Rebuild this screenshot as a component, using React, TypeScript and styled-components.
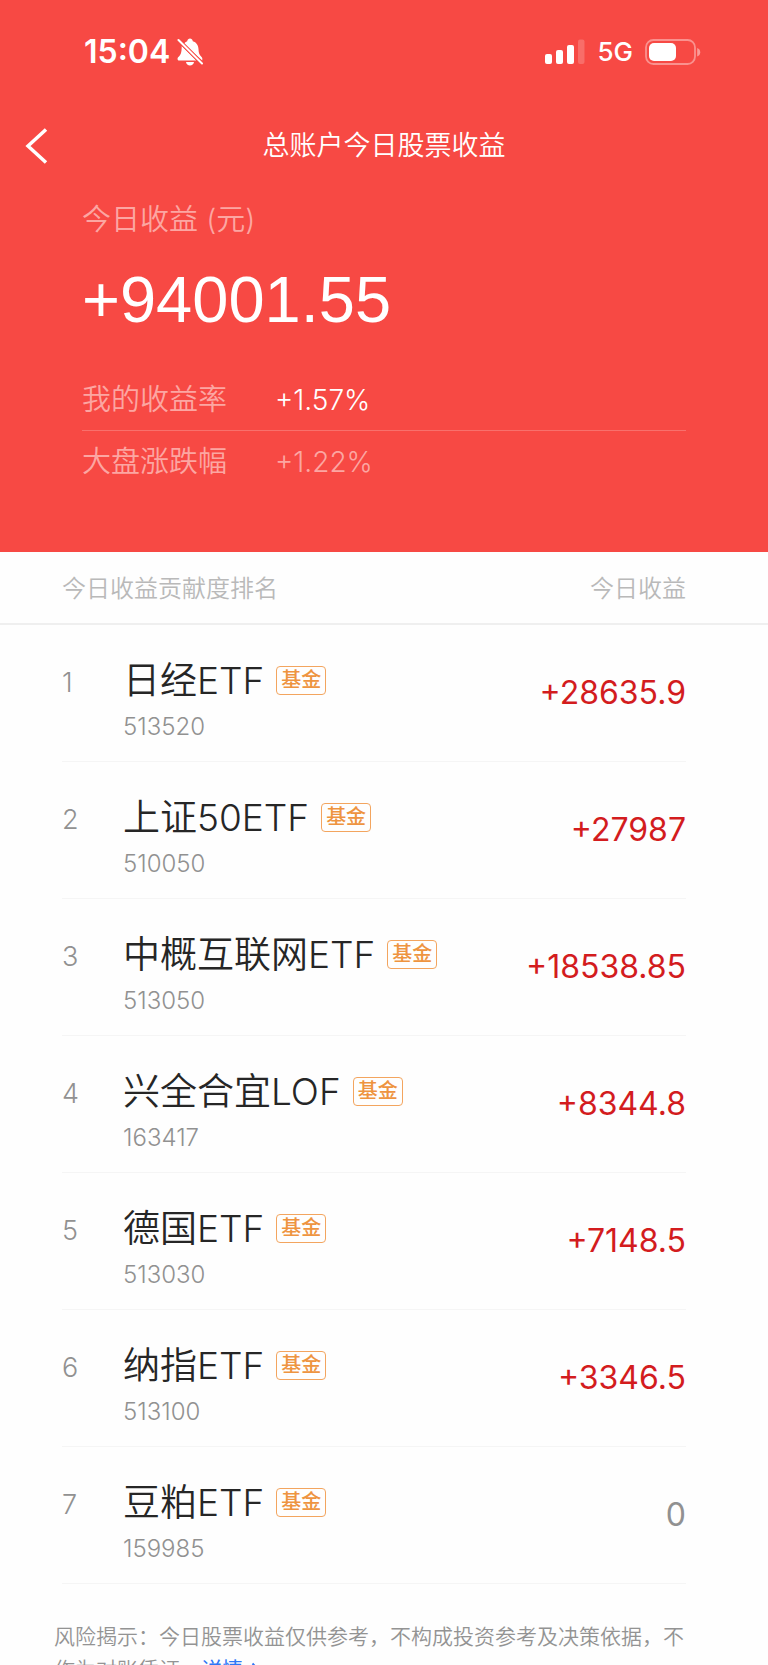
import React from 'react';
import styled, { createGlobalStyle } from 'styled-components';

const GlobalStyle = createGlobalStyle`
  * { box-sizing: border-box; }
  body {
    margin: 0;
    background: #fefefe;
    font-family: Inter, "Noto Sans CJK SC", sans-serif;
    font-weight: 350;
  }
`;

const Screen = styled.main`
  display: flex;
  flex-direction: column;
  height: 100vh;
  overflow: hidden;
  background: #fefefe;
`;

const Hero = styled.header`
  flex: none;
  height: 552px;
  background: #f74944;
  color: #fff;
`;

const StatusBar = styled.div`
  display: flex;
  align-items: center;
  justify-content: space-between;
  height: 104px;
  padding: 0 67px 0 84px;
`;

const StatusGroup = styled.div<{ $gap: number }>`
  display: flex;
  align-items: center;
  gap: ${(p) => p.$gap}px;
`;

const Clock = styled.time`
  font-size: 32px;
  line-height: 40px;
  font-weight: 600;
`;

const Network = styled.span`
  font-size: 26px;
  line-height: 32px;
  font-weight: 500;
`;

const NavBar = styled.nav`
  display: grid;
  grid-template-columns: 72px 1fr 72px;
  align-items: center;
  height: 84px;
`;

const BackButton = styled.button`
  display: flex;
  align-items: center;
  height: 64px;
  padding: 0 0 0 24px;
  border: 0;
  background: none;
  color: inherit;
`;

const Title = styled.h1`
  margin: 0;
  font-size: 27px;
  line-height: 40px;
  font-weight: 350;
  text-align: center;
`;

const Summary = styled.section`
  padding: 12px 82px 0;
`;

const SummaryLabel = styled.p`
  margin: 0;
  font-size: 29px;
  line-height: 40px;
  color: #fca6a2;
`;

const Total = styled.p`
  margin: 20px 0 30px;
  font-family: "Liberation Sans", sans-serif;
  font-size: 65px;
  line-height: 80px;
  font-weight: 400;
`;

const Rates = styled.dl`
  margin: 0;
`;

const RateRow = styled.div<{ $muted?: boolean }>`
  display: flex;
  align-items: center;
  height: 60px;
  font-size: 28px;
  color: ${(p) => (p.$muted ? '#fca6a2' : '#fff')};

  & + & {
    padding-top: 2px;
    border-top: 1px solid #f8706c;
  }
`;

const RateName = styled.dt`
  width: 193px;
  font-size: 29px;
  line-height: 40px;
  color: #fca6a2;
`;

const RateValue = styled.dd`
  margin: 0;
`;

const Ranking = styled.table`
  display: block;
  flex: none;
`;

const RankingHead = styled.thead`
  display: block;
`;

const HeadRow = styled.tr`
  display: flex;
  align-items: center;
  justify-content: space-between;
  height: 73px;
  padding: 2px 82px 0 62px;
  border-bottom: 2px solid #efefef;
`;

const HeadCell = styled.th`
  padding: 0;
  font-size: 24px;
  line-height: 36px;
  font-weight: 350;
  color: #b9b9b9;
`;

const RankingBody = styled.tbody`
  display: block;
  padding: 0 82px 0 62px;
`;

const FundRow = styled.tr`
  display: flex;
  align-items: flex-start;
  height: 137px;
  border-bottom: 1px solid #f5f5f5;
`;

const Rank = styled.td`
  width: 61px;
  padding: 38px 0 0;
  font-size: 27px;
  line-height: 40px;
  color: #919191;
`;

const Fund = styled.td`
  flex: 1;
  padding: 30px 0 0;
`;

const NameLine = styled.div`
  display: flex;
  align-items: center;
  gap: 12px;
`;

const FundName = styled.span`
  font-size: 37px;
  line-height: 52px;
  color: #262626;
`;

const Tag = styled.span`
  height: 29px;
  margin-bottom: 2px;
  padding: 0 4px;
  border: 1px solid #f3a55f;
  border-radius: 4px;
  font-size: 20px;
  line-height: 26px;
  font-weight: 500;
  color: #ee9440;
`;

const Code = styled.div`
  margin-top: 2px;
  font-size: 24px;
  line-height: 36px;
  color: #919191;
`;

const Amount = styled.td<{ $flat: boolean }>`
  padding: 48px 0 0;
  font-size: 32px;
  line-height: 40px;
  font-weight: 400;
  text-align: right;
  color: ${(p) => (p.$flat ? '#919191' : '#d31c1e')};
`;

const Notice = styled.p`
  margin: 0;
  padding: 36px 72px 0 54px;
  font-size: 21px;
  line-height: 33px;
  color: #939393;
`;

const DetailLink = styled.a`
  font-weight: 400;
  color: #2f76f6;
  text-decoration: none;

  svg {
    margin-left: 8px;
  }
`;

const funds = [
  { name: '日经ETF', code: '513520', amount: '+28635.9' },
  { name: '上证50ETF', code: '510050', amount: '+27987' },
  { name: '中概互联网ETF', code: '513050', amount: '+18538.85' },
  { name: '兴全合宜LOF', code: '163417', amount: '+8344.8' },
  { name: '德国ETF', code: '513030', amount: '+7148.5' },
  { name: '纳指ETF', code: '513100', amount: '+3346.5' },
  { name: '豆粕ETF', code: '159985', amount: '0' },
];

const SilentBell = () => (
  <svg width="26" height="28" viewBox="0 0 26 28" aria-hidden="true">
    <path
      fill="#fff"
      d="M7 6C7.800 4.500 8.900 3.600 10.200 3.200 10.500 1.400 11.600.5 13 .5s2.500.9 2.800 2.700c3.600 1 5.600 4 5.700 8 .1 4.200 1.100 5.800 3.100 7.700.8.800.9 1.800.6 3.500z"
    />
    <path fill="#fff" d="M4.700 8 19.500 22.600H2.200C.4 22.600 0 20.300 1.400 19c2.400-2.200 3.300-4.400 3.300-11zM9 24h8c-.3 2.200-1.900 3.500-4 3.500S9.300 26.200 9 24z" />
    <path stroke="#f74944" strokeWidth="4" d="M0 .5 26 26.500" />
    <path stroke="#fff" strokeWidth="2" strokeLinecap="round" d="M1.500 2 25 25.500" />
  </svg>
);

const Signal = () => (
  <svg width="40" height="26" viewBox="0 0 40 26" aria-hidden="true" fill="#fff">
    <rect x="0" y="15" width="7" height="10" rx="2" />
    <rect x="11" y="11" width="7" height="14" rx="2" />
    <rect x="22" y="6" width="7" height="19" rx="2" />
    <rect x="33" y="0.500" width="6.500" height="24.500" rx="2" opacity="0.200" />
  </svg>
);

const Battery = () => (
  <svg width="56" height="26" viewBox="0 0 56 26" aria-hidden="true">
    <rect x="1" y="1" width="49" height="24" rx="7.500" fill="none" stroke="#fff" strokeOpacity="0.400" strokeWidth="1.800" />
    <rect x="4" y="4" width="27" height="18" rx="5" fill="#fff" />
    <path d="M52.200 9v8.500c2-.6 3-2.200 3-4.250s-1-3.650-3-4.250z" fill="#fff" opacity="0.450" />
  </svg>
);

const BackIcon = () => (
  <svg width="24" height="36" viewBox="0 0 24 36" aria-hidden="true">
    <path d="M22 1.500 4 18 22 34.500" fill="none" stroke="#fff" strokeWidth="3.500" />
  </svg>
);

const MoreIcon = () => (
  <svg width="9" height="15" viewBox="0 0 9 15" aria-hidden="true">
    <path d="M1.500 1.500 7 7.500 1.500 13.500" fill="none" stroke="#2f76f6" strokeWidth="2" />
  </svg>
);

export default function App() {
  return (
    <Screen>
      <GlobalStyle />
      <Hero>
        <StatusBar>
          <StatusGroup $gap={7}>
            <Clock>15:04</Clock>
            <SilentBell />
          </StatusGroup>
          <StatusGroup $gap={12}>
            <Signal />
            <Network>5G</Network>
            <Battery />
          </StatusGroup>
        </StatusBar>
        <NavBar>
          <BackButton aria-label="返回">
            <BackIcon />
          </BackButton>
          <Title>总账户今日股票收益</Title>
        </NavBar>
        <Summary>
          <SummaryLabel>今日收益 (元)</SummaryLabel>
          <Total>+94001.55</Total>
          <Rates>
            <RateRow>
              <RateName>我的收益率</RateName>
              <RateValue>+1.57%</RateValue>
            </RateRow>
            <RateRow $muted>
              <RateName>大盘涨跌幅</RateName>
              <RateValue>+1.22%</RateValue>
            </RateRow>
          </Rates>
        </Summary>
      </Hero>
      <Ranking>
        <RankingHead>
          <HeadRow>
            <HeadCell>今日收益贡献度排名</HeadCell>
            <HeadCell>今日收益</HeadCell>
          </HeadRow>
        </RankingHead>
        <RankingBody>
          {funds.map((fund, index) => (
            <FundRow key={fund.code}>
              <Rank>{index + 1}</Rank>
              <Fund>
                <NameLine>
                  <FundName>{fund.name}</FundName>
                  <Tag>基金</Tag>
                </NameLine>
                <Code>{fund.code}</Code>
              </Fund>
              <Amount $flat={fund.amount === '0'}>{fund.amount}</Amount>
            </FundRow>
          ))}
        </RankingBody>
      </Ranking>
      <Notice>
        风险揭示：今日股票收益仅供参考，不构成投资参考及决策依据，不作为对账凭证。
        <DetailLink href="#detail">
          详情
          <MoreIcon />
        </DetailLink>
      </Notice>
    </Screen>
  );
}
